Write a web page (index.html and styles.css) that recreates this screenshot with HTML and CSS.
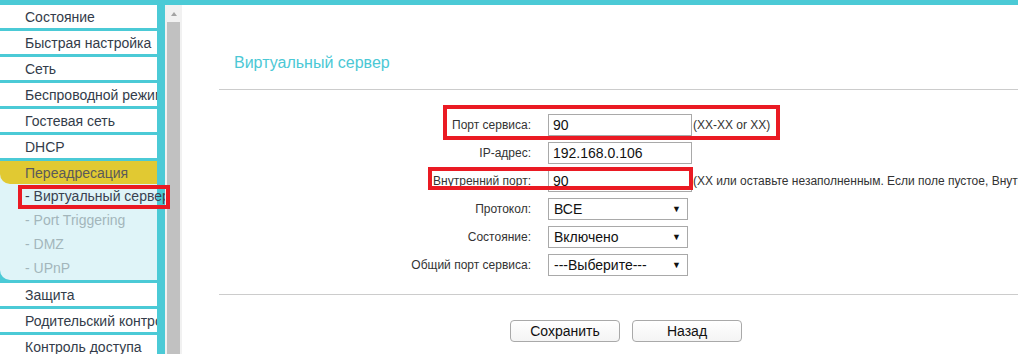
FILE: index.html
```html
<!DOCTYPE html>
<html lang="ru">
<head>
<meta charset="utf-8">
<title>Виртуальный сервер</title>
<link rel="stylesheet" href="styles.css">
</head>
<body>
<div class="topbar"></div>
<div class="layout">
  <nav class="sidebar">
    <a class="item">Состояние</a>
    <a class="item">Быстрая настройка</a>
    <a class="item">Сеть</a>
    <a class="item">Беспроводной режим</a>
    <a class="item">Гостевая сеть</a>
    <a class="item">DHCP</a>
    <div class="group">
      <a class="item-active">Переадресация</a>
      <a class="sub current">- Виртуальный сервер</a>
      <a class="sub">- Port Triggering</a>
      <a class="sub">- DMZ</a>
      <a class="sub">- UPnP</a>
    </div>
    <a class="item">Защита</a>
    <a class="item">Родительский контроль</a>
    <a class="item">Контроль доступа</a>
  </nav>
  <div class="scrollbar"><span class="arrow"></span><div class="thumb"></div></div>
  <div class="mark mark-side"></div>
  <main class="main">
    <h1 class="title">Виртуальный сервер</h1>
    <form class="form">
      <div class="row">
        <label class="label">Порт сервиса:</label>
        <input class="field" type="text" value="90">
        <span class="hint">(XX-XX or XX)</span>
        <div class="mark mark-r1"></div>
      </div>
      <div class="row">
        <label class="label">IP-адрес:</label>
        <input class="field" type="text" value="192.168.0.106">
      </div>
      <div class="row">
        <label class="label">Внутренний порт:</label>
        <input class="field" type="text" value="90">
        <span class="hint">(XX или оставьте незаполненным. Если поле пустое, Внутренний порт будет таким же, как порт сервиса)</span>
        <div class="mark mark-r3"></div>
      </div>
      <div class="row">
        <label class="label">Протокол:</label>
        <div class="select"><span>ВСЕ</span><span class="caret">▼</span></div>
      </div>
      <div class="row">
        <label class="label">Состояние:</label>
        <div class="select"><span>Включено</span><span class="caret">▼</span></div>
      </div>
      <div class="row">
        <label class="label">Общий порт сервиса:</label>
        <div class="select"><span>---Выберите---</span><span class="caret">▼</span></div>
      </div>
    </form>
    <div class="buttons">
      <button class="btn" type="button">Сохранить</button>
      <button class="btn" type="button">Назад</button>
    </div>
  </main>
</div>
</body>
</html>
```
FILE: styles.css
```css
* { box-sizing: border-box; }
html, body { margin: 0; padding: 0; }
body {
  width: 1018px;
  height: 354px;
  overflow: hidden;
  background: #fff;
  font-family: "Liberation Sans", Arial, sans-serif;
  color: #333;
}
.topbar { height: 5px; background: #4bcad6; }
.layout {
  position: relative;
  display: flex;
  height: 349px;
}
.sidebar {
  width: 165px;
  flex: none;
  background: #4bcad6;
  padding-right: 8px;
  overflow: hidden;
  display: flex;
  flex-direction: column;
}
.item, .item-active, .sub {
  display: block;
  flex: none;
  font-size: 14px;
  white-space: nowrap;
  padding-left: 25px;
  cursor: pointer;
}
.item {
  height: 23px;
  line-height: 22px;
  padding-top: 1px;
  margin-bottom: 3px;
  background: #fff;
  color: #333c4a;
  overflow: hidden;
}
.group {
  flex: none;
  background: #dff4f8;
  border-bottom-left-radius: 10px;
  margin-bottom: 3px;
}
.item-active {
  height: 23px;
  line-height: 22px;
  padding-top: 1px;
  background: #e1c932;
  color: #5a5a5a;
  border-bottom-left-radius: 10px;
}
.sub {
  height: 24px;
  line-height: 23px;
  padding-top: 1px;
  color: #a3b6bb;
}
.sub.current { color: #3a4250; }
.scrollbar {
  width: 17px;
  flex: none;
  background: #f1f1f1;
  display: flex;
  flex-direction: column;
  align-items: center;
  padding-top: 7px;
}
.arrow {
  width: 0;
  height: 0;
  border-left: 3px solid transparent;
  border-right: 3px solid transparent;
  border-bottom: 4px solid #a3a3a3;
}
.thumb {
  margin-top: 6px;
  width: 13px;
  flex: 1;
  background: #c1c1c1;
}
.mark {
  position: absolute;
  border: 4px solid #ea1a23;
  pointer-events: none;
}
.mark-side { left: 18px; top: 180px; width: 152px; height: 24px; }
.main {
  flex: 1;
  min-width: 0;
  padding-left: 37px;
  overflow: hidden;
}
.title {
  margin: 0;
  padding: 48px 0 0 15px;
  height: 85px;
  font-size: 16px;
  line-height: 20px;
  font-weight: normal;
  color: #4bc8d5;
  border-bottom: 1px solid #cccccc;
}
.form {
  padding: 21px 0 15px;
  border-bottom: 1px solid #cccccc;
}
.row {
  position: relative;
  display: flex;
  align-items: center;
  height: 28px;
  white-space: nowrap;
}
.label {
  width: 312px;
  flex: none;
  text-align: right;
  font-size: 12px;
  color: #333;
  margin-right: 17px;
}
.field {
  width: 144px;
  height: 22px;
  flex: none;
  border: 1px solid #a9a9a9;
  padding: 0 4px;
  font-family: "Liberation Sans", Arial, sans-serif;
  font-size: 14px;
  color: #111;
  background: #fff;
  outline: none;
}
.hint {
  font-size: 12px;
  color: #333;
  padding-left: 1px;
}
.select {
  width: 140px;
  height: 22px;
  flex: none;
  border: 1px solid #a9a9a9;
  display: flex;
  align-items: center;
  justify-content: space-between;
  padding: 0 6px 0 5px;
  font-size: 14px;
  color: #111;
  background: #fff;
}
.caret { font-size: 9px; color: #111; }
.mark-r1 { left: 224px; top: -6px; width: 337px; height: 35px; }
.mark-r3 { left: 209px; top: 0; width: 265px; height: 23px; }
.buttons {
  display: flex;
  gap: 12px;
  padding: 25px 0 0 291px;
}
.btn {
  width: 110px;
  height: 22px;
  border: 1px solid #a9a9a9;
  border-radius: 4px;
  background: linear-gradient(#ffffff, #f4f4f4);
  font-family: "Liberation Sans", Arial, sans-serif;
  font-size: 14px;
  color: #111;
  padding: 0;
}
```
